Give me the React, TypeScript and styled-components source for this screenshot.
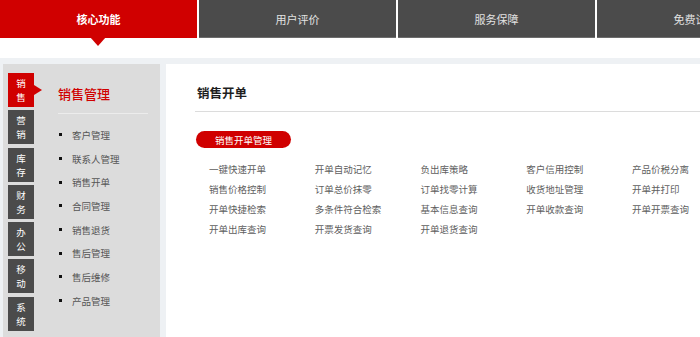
import React from "react";
import styled, { createGlobalStyle } from "styled-components";

const Global = createGlobalStyle`
  html, body { margin: 0; padding: 0; background: #fff; }
  body {
    width: 700px; height: 337px; overflow: hidden;
    font-family: "Noto Sans CJK SC", "Noto Sans", sans-serif;
  }
`;

const Page = styled.div`
  width: 700px;
  height: 337px;
  overflow: hidden;
  display: flex;
  flex-direction: column;
`;

const TopNav = styled.nav`
  display: flex;
  gap: 2px;
  height: 38px;
  flex: 0 0 38px;
  margin-bottom: 20px;
`;

const TopTab = styled.div<{ $active?: boolean }>`
  position: relative;
  flex: 0 0 197px;
  box-sizing: border-box;
  height: 38px;
  display: flex;
  align-items: center;
  justify-content: center;
  background: ${(p) => (p.$active ? "#d00000" : "#4b4b4b")};
  border-bottom: 1px solid ${(p) => (p.$active ? "#d00000" : "#6c6c6c")};
  color: ${(p) => (p.$active ? "#ffffff" : "#e2e2e2")};
  font-size: 11px;
  font-weight: ${(p) => (p.$active ? 700 : 400)};
  white-space: nowrap;
  &::after {
    content: ${(p) => (p.$active ? "''" : "none")};
    position: absolute;
    left: 50%;
    top: 100%;
    margin-left: -9px;
    border-left: 8px solid transparent;
    border-right: 8px solid transparent;
    border-top: 9px solid #d00000;
  }
`;

const Band = styled.div`
  flex: 1;
  background: #eef1f4;
  display: flex;
  gap: 6px;
  padding: 6px 0 0 3px;
`;

const LeftPanel = styled.aside`
  width: 157px;
  flex: 0 0 157px;
  background: #dcdcdc;
  display: flex;
  padding: 9px 0 0 5px;
  box-sizing: border-box;
`;

const SideTabs = styled.div`
  display: flex;
  flex-direction: column;
  gap: 3.3px;
  width: 26px;
`;

const SideTab = styled.div<{ $active?: boolean }>`
  position: relative;
  width: 26px;
  height: 34px;
  background: ${(p) => (p.$active ? "#d00000" : "#4b4b4b")};
  color: #fff;
  font-size: 9.5px;
  line-height: 14px;
  display: flex;
  flex-direction: column;
  align-items: center;
  justify-content: center;
  &::after {
    content: ${(p) => (p.$active ? "''" : "none")};
    position: absolute;
    left: 100%;
    top: 50%;
    margin-top: -5px;
    border-top: 5px solid transparent;
    border-bottom: 5px solid transparent;
    border-left: 8px solid #d00000;
  }
`;

const SubMenu = styled.div`
  margin-left: 24px;
  width: 90px;
`;

const SubTitle = styled.div`
  margin-top: 11px;
  line-height: 20px;
  font-size: 13px;
  font-weight: 500;
  color: #d00000;
  padding-bottom: 9px;
  border-bottom: 1px solid #ececec;
`;

const SubList = styled.ul`
  list-style: none;
  margin: 0;
  padding: 9px 0 0 1px;
`;

const SubItem = styled.li`
  display: flex;
  align-items: center;
  height: 23.7px;
  font-size: 9.5px;
  color: #555;
  &::before {
    content: "";
    width: 3px;
    height: 3px;
    background: #111;
    margin-right: 10px;
  }
`;

const Main = styled.main`
  flex: 1;
  background: #fff;
  padding: 0 0 0 29px;
  min-width: 0;
`;

const MainTitle = styled.h2`
  margin: 19px 0 0 0;
  padding: 0 0 8px 2px;
  line-height: 20px;
  font-size: 12.5px;
  font-weight: 700;
  color: #1e1e1e;
  border-bottom: 1px solid #dcdcdc;
`;

const Pill = styled.div`
  margin: 19px 0 0 1px;
  width: 95px;
  height: 17px;
  border-radius: 9px;
  background: #d00000;
  color: #fff;
  font-size: 9.5px;
  display: flex;
  align-items: center;
  justify-content: center;
`;

const Grid = styled.div`
  margin: 11px 0 0 14px;
  display: grid;
  grid-template-columns: repeat(5, 105.75px);
  grid-auto-rows: 20px;
`;

const GridItem = styled.div`
  font-size: 9.5px;
  line-height: 20px;
  color: #5e5e5e;
  white-space: nowrap;
`;

const topTabs = ["核心功能", "用户评价", "服务保障", "免费试用"];
const sideTabs = ["销售", "营销", "库存", "财务", "办公", "移动", "系统"];
const subItems = ["客户管理", "联系人管理", "销售开单", "合同管理", "销售退货", "售后管理", "售后维修", "产品管理"];
const gridItems = [
  "一键快速开单", "开单自动记忆", "负出库策略", "客户信用控制", "产品价税分离",
  "销售价格控制", "订单总价抹零", "订单找零计算", "收货地址管理", "开单并打印",
  "开单快捷检索", "多条件符合检索", "基本信息查询", "开单收款查询", "开单开票查询",
  "开单出库查询", "开票发货查询", "开单退货查询",
];

export default function App() {
  return (
    <Page>
      <Global />
      <TopNav>
        {topTabs.map((t, i) => (
          <TopTab key={t} $active={i === 0}>{t}</TopTab>
        ))}
      </TopNav>
      <Band>
        <LeftPanel>
          <SideTabs>
            {sideTabs.map((t, i) => (
              <SideTab key={t} $active={i === 0}>
                <span>{t[0]}</span>
                <span>{t[1]}</span>
              </SideTab>
            ))}
          </SideTabs>
          <SubMenu>
            <SubTitle>销售管理</SubTitle>
            <SubList>
              {subItems.map((s) => (
                <SubItem key={s}>{s}</SubItem>
              ))}
            </SubList>
          </SubMenu>
        </LeftPanel>
        <Main>
          <MainTitle>销售开单</MainTitle>
          <Pill>销售开单管理</Pill>
          <Grid>
            {gridItems.map((g) => (
              <GridItem key={g}>{g}</GridItem>
            ))}
          </Grid>
        </Main>
      </Band>
    </Page>
  );
}
